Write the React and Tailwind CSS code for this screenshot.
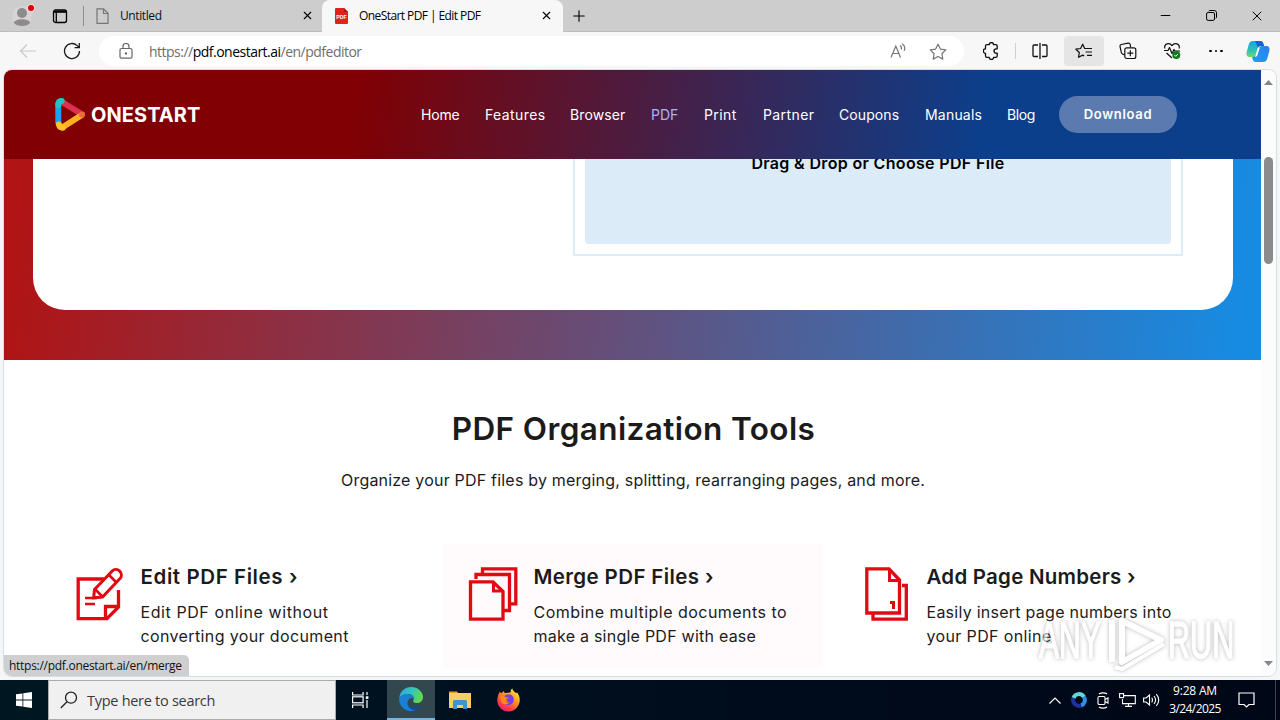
import { X, Plus, Minus } from "lucide-react";

const UI = "font-['Open_Sans',sans-serif]";
const SITE = "font-[Inter,sans-serif]";

const navLinks = [
  { label: "Home", cls: "w-[64px] tracking-[-0.2px]" },
  { label: "Features", cls: "w-[85px] tracking-[0.4px]" },
  { label: "Browser", cls: "w-[81px] tracking-[0.1px]" },
  { label: "PDF", cls: "w-[53px] tracking-[0px] text-[#a9b4f4]" },
  { label: "Print", cls: "w-[59px] tracking-[0.4px]" },
  { label: "Partner", cls: "w-[76px] tracking-[0.4px]" },
  { label: "Coupons", cls: "w-[86px] tracking-[0.1px]" },
  { label: "Manuals", cls: "w-[82px] tracking-[0.2px]" },
  { label: "Blog", cls: "w-[52px] tracking-[-0.4px]" },
];

function EditIcon() {
  return (
    <svg width="54" height="56" viewBox="0 0 54 56" fill="none" stroke="#e00b12" strokeWidth="3.3">
      <path d="M30 14H4.200v39.700H33L44.500 42V25" />
      <path d="M31.500 53V41.500H44.500" />
      <path d="M20.500 24.500 38 6.200a5.400 5.400 0 0 1 7.800 7.600L28.500 32l-8.800.8z" strokeWidth="3" />
      <path d="M34.500 9.500l8 8M21 24l7.800 8" strokeWidth="2.600" />
      <path d="M11 33h12M11 39h10" strokeWidth="2.400" />
    </svg>
  );
}

function MergeIcon() {
  return (
    <svg width="54" height="56" viewBox="0 0 54 56" fill="none" stroke="#e00b12" strokeWidth="3.3">
      <path d="M15.500 8V3.800H48.800V38.800H43" />
      <path d="M9 14V9.500H42.500V45.500H36" />
      <path d="M3.500 16.800H26L36 26.500V54.200H3.500z" />
      <path d="M26.500 16.500V26H36" strokeWidth="3.100" />
    </svg>
  );
}

function NumbersIcon() {
  return (
    <svg width="54" height="56" viewBox="0 0 54 56" fill="none" stroke="#e00b12" strokeWidth="3.300">
      <path d="M6.800 3.800H29L39.500 15V48H6.800z" />
      <path d="M29.500 4V15.500H39.500" strokeWidth="3" />
      <path d="M42 20.500H46.300V54.200H13V48" />
      <path d="M30 37.500H33.500V44" strokeWidth="3" />
    </svg>
  );
}

const tools = [
  {
    Icon: EditIcon,
    title: "Edit PDF Files ›",
    titleCls: "tracking-[0.59px]",
    lines: [
      { text: "Edit PDF online without", cls: "tracking-[0.58px]" },
      { text: "converting your document", cls: "tracking-[0.37px]" },
    ],
  },
  {
    Icon: MergeIcon,
    title: "Merge PDF Files ›",
    titleCls: "tracking-[0.38px]",
    lines: [
      { text: "Combine multiple documents to", cls: "tracking-[0.47px]" },
      { text: "make a single PDF with ease", cls: "tracking-[0.24px]" },
    ],
    hovered: true,
  },
  {
    Icon: NumbersIcon,
    title: "Add Page Numbers ›",
    titleCls: "tracking-[0.24px]",
    lines: [
      { text: "Easily insert page numbers into", cls: "tracking-[0.26px]" },
      { text: "your PDF online", cls: "tracking-[0.37px]" },
    ],
  },
];

function TabBar() {
  return (
    <div className={`flex h-8 shrink-0 items-center border-b border-[#bdbdbd] bg-[#cdcdcd] ${UI}`}>
      <div className="flex w-11 justify-center">
        <svg width="26" height="26" viewBox="0 0 26 26">
          <circle cx="13" cy="13" r="10" fill="#d8d4d4" />
          <circle cx="13" cy="10" r="5" fill="#8c8c8c" />
          <path d="M5 20c0-5 16-5 16 0-3 4-13 4-16 0z" fill="#8c8c8c" />
          <circle cx="22" cy="5" r="4" fill="#f3d5d5" />
          <circle cx="22" cy="5" r="3" fill="#e0000d" />
        </svg>
      </div>
      <div className="flex w-8 justify-center">
        <svg width="16" height="16" viewBox="0 0 16 16" fill="none" stroke="#000" strokeWidth="1.3">
          <rect x="1.500" y="2" width="13" height="12.500" rx="2" />
          <path d="M2 3.700h12" strokeWidth="2.200" />
          <path d="M4.300 4v10" strokeWidth="1.300" />
        </svg>
      </div>
      <div className="ml-[7px] h-5 w-px bg-[#8f8f8f]" />
      <div className="flex w-[238px] items-center pl-3">
        <svg width="13" height="16" viewBox="0 0 13 16" fill="none" stroke="#767676" strokeWidth="1.200">
          <path d="M1 .8h6.500L12 5.300v10H1zM7.500 1v4.500H12" />
        </svg>
        <span className="ml-[11px] flex-1 text-[12px] tracking-[-0.4px] text-[#111]">Untitled</span>
        <X size={13} strokeWidth={2} className="mr-[8px]" />
      </div>
      <div className="flex h-8 w-[241px] items-center rounded-t-lg bg-[#f7f7f7] pl-[13px]">
        <svg width="13" height="16" viewBox="0 0 13 16">
          <path d="M1 0H9l4 4v11a1 1 0 0 1-1 1H1a1 1 0 0 1-1-1V1a1 1 0 0 1 1-1z" fill="#e4201c" />
          <path d="M9 0l4 4H9z" fill="#a81512" />
          <text x="6.500" y="10.500" fontSize="5.200" fontWeight="700" fontFamily="Liberation Sans" fill="#fff" textAnchor="middle">PDF</text>
        </svg>
        <span className="ml-[11px] flex-1 text-[12px] tracking-[-0.58px] text-black">OneStart PDF | Edit PDF</span>
        <X size={13} strokeWidth={2} className="mr-[10px]" />
      </div>
      <Plus size={18} strokeWidth={1.5} className="ml-[7px]" />
      <div className="ml-auto flex">
        <div className="flex w-[46px] justify-center"><Minus size={15} strokeWidth={1.600} /></div>
        <div className="flex w-[46px] items-center justify-center">
          <svg width="11" height="11" viewBox="0 0 11 11" fill="none" stroke="#000">
            <rect x=".6" y="2.500" width="7.900" height="7.900" rx="1.500" />
            <path d="M2.700 1C3 .6 3.500.5 4 .5h4.300a2.200 2.200 0 0 1 2.200 2.200V7c0 .7-.2 1-.6 1.300" />
          </svg>
        </div>
        <div className="flex w-[46px] justify-center"><X size={16} strokeWidth={1.500} /></div>
      </div>
    </div>
  );
}

function Toolbar() {
  return (
    <div className={`flex h-[38px] shrink-0 items-center bg-[#f7f7f7] ${UI}`}>
      <div className="flex w-14 justify-center">
        <svg width="18" height="16" viewBox="0 0 18 16" fill="none" stroke="#c9c9c9" strokeWidth="1.200">
          <path d="M17 8H1.500M8 1.500 1.500 8 8 14.500" />
        </svg>
      </div>
      <div className="flex w-8 justify-center">
        <svg width="18" height="18" viewBox="0 0 18 18" fill="none" stroke="#1b1b1b" strokeWidth="1.300">
          <path d="M16.500 9a7.500 7.500 0 1 1-2.300-5.400L16 5.500M16.300 1v4.700h-4.700" />
        </svg>
      </div>
      <div className="ml-[11px] flex h-[30px] w-[865px] items-center rounded-full bg-white pl-5">
        <svg width="14" height="16" viewBox="0 0 14 16" fill="none" stroke="#666" strokeWidth="1.200">
          <rect x="1" y="5.500" width="12" height="9.700" rx="1.500" />
          <path d="M4 5.500V3.500a3 3 0 0 1 6 0v2" />
          <circle cx="7" cy="10.400" r=".6" fill="#666" />
        </svg>
        <span className="ml-4 flex-1 text-[14px] tracking-[-0.51px] text-[#6e6e6e]">
          https://<span className="text-black">pdf.onestart.ai</span>/en/pdfeditor
        </span>
        <svg width="17" height="16" viewBox="0 0 17 16" fill="none" stroke="#757575" strokeWidth="1.200">
          <path d="M1 14.500 5.800 3l4.700 11.500M2.700 10.500h6.200M10 2.500c1.500 1 1.800 2.500 1.300 4M12 .8c2.800 1.700 3.200 4.500 2.200 7" />
        </svg>
        <svg width="18" height="17" viewBox="0 0 18 17" fill="none" stroke="#757575" strokeWidth="1.200" strokeLinejoin="round" className="ml-[22px] mr-[17px]">
          <path d="M9 1.200l2.400 4.900 5.400.8-3.900 3.800.9 5.400L9 13.500l-4.800 2.600.9-5.400L1.200 6.900l5.400-.8z" />
        </svg>
      </div>
      <div className="ml-[7px] flex w-10 justify-center">
        <svg width="16" height="18" viewBox="0 0 16 18" fill="none" stroke="#111" strokeWidth="1.300" strokeLinejoin="round">
          <path d="M2.500 5.500V4A1.300 1.300 0 0 1 3.800 2.700H6.200a2.200 2.200 0 0 1 4.400 0h2.300A1.300 1.300 0 0 1 14.200 4v2.800h-1a2.100 2.100 0 0 0 0 4.300h1V14a1.300 1.300 0 0 1-1.300 1.300h-2.300a2.200 2.200 0 0 1-4.400 0H3.800A1.300 1.300 0 0 1 2.500 14v-2.700a2.200 2.200 0 0 1 0-4.500z" />
        </svg>
      </div>
      <div className="ml-1 mr-1 h-4 w-px bg-[#d0d0d0]" />
      <div className="flex w-10 justify-center">
        <svg width="16" height="16" viewBox="0 0 16 16" fill="none" stroke="#111" strokeWidth="1.300">
          <path d="M6 2H2a1 1 0 0 0-1 1v9.500a1 1 0 0 0 1 1h4M10 2h4a1 1 0 0 1 1 1v9.500a1 1 0 0 1-1 1h-4M8 0v16" />
        </svg>
      </div>
      <div className="ml-1 flex h-[30px] w-10 items-center justify-center rounded bg-[#e5e5e5]">
        <svg width="18" height="16" viewBox="0 0 18 16" fill="none" stroke="#111" strokeWidth="1.200" strokeLinejoin="round">
          <path d="M10 5.500H9.700L7.700 1.200 5.600 5.500l-4.700.7 3.400 3.300-.8 4.800 4.200-2.200 1.500.8M10 5.500h7M10.500 9H17M12 12.300h5" />
        </svg>
      </div>
      <div className="ml-1 flex w-10 justify-center">
        <svg width="18" height="18" viewBox="0 0 18 18" fill="none" stroke="#111" strokeWidth="1.200">
          <rect x="5.800" y="5.800" width="11" height="10.700" rx="2" />
          <path d="M11.300 8.200v6M8.300 11.200h6M5.500 13 3.500 12C2.500 11.500 2.500 11 2.200 10L1 4.500C.8 3.300 1.200 2.700 2.300 2.500L9 1.200c1.200-.2 2 .2 2.200 1.300l.5 3" />
        </svg>
      </div>
      <div className="ml-1 flex w-10 justify-center">
        <svg width="18" height="18" viewBox="0 0 18 18" fill="none" stroke="#111" strokeWidth="1.200" strokeLinejoin="round">
          <path d="M1.800 6.500C.8 1.500 6.500 0 9 3.600 11.500 0 17.200 1.500 16.200 6.500M1 8.500h4l1.500-3 2.500 6 2-4 .8 1.500H17M3.500 11 9 16" />
          <circle cx="13.300" cy="13" r="4" fill="#14791a" stroke="none" />
          <path d="M11.500 13l1.300 1.300 2.300-2.400" stroke="#fff" strokeWidth="1" />
        </svg>
      </div>
      <div className="ml-1 flex w-10 justify-center gap-[3px]">
        <i className="size-[2.5px] rounded-full bg-black" />
        <i className="size-[2.5px] rounded-full bg-black" />
        <i className="size-[2.5px] rounded-full bg-black" />
      </div>
      <div className="ml-[2px] flex w-10 justify-center">
        <svg width="24" height="23" viewBox="0 0 24 23">
          <defs>
            <linearGradient id="cpA" x1="0" y1="0" x2="0" y2="1">
              <stop offset="0" stopColor="#16a6e8" />
              <stop offset=".6" stopColor="#2cc3b0" />
              <stop offset="1" stopColor="#7bd66e" />
            </linearGradient>
            <linearGradient id="cpB" x1="1" y1="0" x2="0" y2="1">
              <stop offset="0" stopColor="#2d7df0" />
              <stop offset="1" stopColor="#1ba0f0" />
            </linearGradient>
          </defs>
          <path d="M17 22h-7c-2 0-3-1-3.500-3L6 16c2 0 3.500-.5 4-2.500L12.500 9c.6-2 1.600-3 3.500-3H20c3 0 4 2 3.300 5l-1.900 7c-.7 2.500-1.900 4-4.400 4z" fill="url(#cpB)" />
          <path d="M7 1h7c2 0 3 1 3.500 3l.5 2h-3c-2 0-3 1-3.500 3L10 14c-.6 2-1.600 3-3.500 3H4c-3 0-4-2-3.300-5L2.600 5C3.300 2.500 4.500 1 7 1z" fill="url(#cpA)" />
          <path d="M9 1h5c2 0 3 1 3.500 3l.5 2h-3c-1.500 0-2.500.6-3 1.800z" fill="#1463c8" />
          <path d="M11.500 9.500c.5-1.700 1.300-2 2.300-2L11.500 15c-.5 1.300-1.300 1.800-2.500 1.800z" fill="#fff" />
        </svg>
      </div>
    </div>
  );
}

function SiteHeader() {
  return (
    <header className="relative z-10 flex h-[89px] shrink-0 items-center bg-[linear-gradient(98deg,#800003_28%,#0b3f8c_78%)] pl-[50px] text-white">
      <div className="flex w-[367px] items-center">
        <svg width="32" height="35" viewBox="0 0 32 35" fill="none" strokeWidth="6" strokeLinecap="round" strokeLinejoin="round">
          <path d="M8 5 27.500 17" stroke="#dc3250" />
          <path d="M27 18.500 9 30" stroke="#fbb022" />
          <path d="M28 17.500v.3" stroke="#ee6a3f" />
          <path d="M4.300 26V7.500C4.300 5 5.800 4 7.500 4" stroke="#1f9ff0" />
          <path d="M4.300 8C4.300 5 5.800 4 7.500 4" stroke="#27c0c8" />
          <path d="M5 27.500c.3 2.300 2 3.500 4 3" stroke="#fcc32a" />
        </svg>
        <span className={`ml-[5px] text-[20px] font-bold tracking-[0.06px] ${SITE}`}>ONESTART</span>
      </div>
      <nav className={`flex text-[14px] ${SITE}`}>
        {navLinks.map((link) => (
          <a key={link.label} className={link.cls}>{link.label}</a>
        ))}
      </nav>
      <button className={`h-[37px] w-[118px] rounded-full bg-[#5b7bb0] text-[13px] font-semibold tracking-[0.7px] ${SITE}`}>Download</button>
    </header>
  );
}

function Hero() {
  return (
    <section className="-mt-4 h-[217px] shrink-0 bg-[linear-gradient(98deg,#b01414_2%,#178be2_98%)] px-[28px] pl-[29px]">
      <div className="flex h-[167px] justify-end rounded-b-[32px] bg-white pr-[50px]">
        <div className="h-[113px] w-[610px] border-2 border-[#dcecf8] p-[10px]">
          <div className={`h-full rounded bg-[#dbecf8] text-center text-[16px] font-semibold leading-4 tracking-[0.34px] text-black ${SITE}`}>
            Drag &amp; Drop or Choose PDF File
          </div>
        </div>
      </div>
    </section>
  );
}

function ToolCard({ tool }) {
  const { Icon, title, lines, titleCls, hovered } = tool;
  return (
    <div className={`flex h-[124px] w-[380px] gap-[13px] rounded pl-6 pt-[21px] ${hovered ? "bg-[#fffafb]" : ""}`}>
      <Icon />
      <div className="whitespace-nowrap text-[#1b1b1b]">
        <h3 className={`text-[20.5px] font-semibold leading-6 ${titleCls}`}>{title}</h3>
        <div className="mt-[11px] text-[16px] leading-6">
          {lines.map((line) => <p key={line.text} className={line.cls}>{line.text}</p>)}
        </div>
      </div>
    </div>
  );
}

function Watermark() {
  return (
    <svg width="204" height="64" viewBox="0 0 204 64" className="absolute bottom-[2px] right-[40px] opacity-60 [filter:drop-shadow(0_0_2px_#888)]">
      <g fill="#fff" stroke="#fff" strokeWidth="1.500" fontFamily="Liberation Sans" fontSize="51">
        <text transform="translate(7 48) scale(.59 1)">ANY</text>
        <text transform="translate(136 48) scale(.6 1)">RUN</text>
      </g>
      <g fill="none" stroke="#fff" strokeWidth="6" strokeLinejoin="round">
        <path d="M80 10v42" />
        <path d="M90 11l39 19-39 22z" />
        <path d="M83 57l7 2 42-25" strokeWidth="4" />
      </g>
    </svg>
  );
}

function Scrollbar() {
  return (
    <div className="flex w-[15px] shrink-0 flex-col items-center bg-[#fcfcfc] pb-[10px] pt-[10px]">
      <svg width="9" height="5" viewBox="0 0 9 5"><path d="M0 5 4.500 0 9 5z" fill="#858585" /></svg>
      <div className="mt-[72px] h-[107px] w-[9px] rounded-full bg-[#8b8b8b]" />
      <svg width="9" height="5" viewBox="0 0 9 5" className="mt-auto"><path d="M0 0l4.500 5L9 0z" fill="#858585" /></svg>
    </div>
  );
}

function Page() {
  return (
    <div className="flex h-[610px] shrink-0 bg-[#f4f6f8] px-1 pb-1">
      <div className="relative flex w-full overflow-hidden rounded-lg bg-white shadow-[0_0_0_1px_#dadcde]">
        <main className={`flex w-[1257px] flex-col overflow-hidden ${SITE}`}>
          <SiteHeader />
          <Hero />
          <section className="flex flex-col items-center pt-[49px]">
            <h1 className="pl-[2px] text-[31.5px] font-semibold leading-10 tracking-[0.4px] text-[#1b1b1b]">PDF Organization Tools</h1>
            <p className="mt-[19px] pl-px text-[16px] leading-6 tracking-[0.2px] text-[#1b1b1b]">
              Organize your PDF files by merging, splitting, rearranging pages, and more.
            </p>
            <div className="mt-[52px] flex w-[1166px] justify-between">
              {tools.map((tool) => <ToolCard key={tool.title} tool={tool} />)}
            </div>
          </section>
        </main>
        <Scrollbar />
        <Watermark />
        <div className={`absolute bottom-0 left-0 h-[21px] w-[185px] rounded-tr-[5px] bg-[#cfcfcf] pl-[5px] text-[12px] leading-[21px] tracking-[-0.28px] text-[#111] ${UI}`}>
          https://pdf.onestart.ai/en/merge
        </div>
      </div>
    </div>
  );
}

function EdgeIcon() {
  return (
    <svg width="24" height="24" viewBox="0 0 24 24">
      <defs>
        <linearGradient id="edA" x1="0" y1="0" x2="1" y2=".3">
          <stop offset="0" stopColor="#2aa6e0" />
          <stop offset=".6" stopColor="#35c8b8" />
          <stop offset="1" stopColor="#62d84e" />
        </linearGradient>
      </defs>
      <path d="M.3 11C1 4 6 0 12 0c7 0 12 5 12 10 0 4-3 6-6 6-3.500 0-4.500-1.500-3.500-3C16 9 12 6.500 8.500 7 4.500 7.500 1.500 9 .3 11z" fill="url(#edA)" />
      <path d="M0 12C1 8.500 5 6.800 9 7c3 .2 5.500 2 5.800 4.500C12 9.800 8.500 12 8.800 16c.3 4 3.700 7 7.700 7.200C8 26.500 0 20 0 12z" fill="#1b7fd6" />
      <path d="M9 13c-1.500 6 5 9.500 13 5.500-1.500 2.500-3.500 4-6 4.800C10 22.500 7 17.500 9 13z" fill="#0d4fa0" />
    </svg>
  );
}

function FirefoxIcon() {
  return (
    <svg width="23" height="24" viewBox="0 0 24 24">
      <defs>
        <linearGradient id="ffA" x1=".9" y1="0" x2=".2" y2="1">
          <stop offset="0" stopColor="#fff04a" />
          <stop offset=".4" stopColor="#ff9a1f" />
          <stop offset=".75" stopColor="#ff3d45" />
          <stop offset="1" stopColor="#e8167c" />
        </linearGradient>
      </defs>
      <path d="M3 3c.5 1 1 1.500 1.500 2L7 2.500c.3 1.500 1 2 2.500 2.300L14.500 4c-.5-1.500 0-3 1.500-4 .3 2 2 3 4 5l1-1c2 3 3 6 2.700 9-.6 6-5.500 11-11.700 11S.5 19 .3 13C.2 9 1.500 6 3 3z" fill="url(#ffA)" />
      <path d="M7 9c1.500-3 6-4 8.500-2 3 2.500 2.500 7.500-.5 9.500-3 1.800-7 .5-8.500-2.500 2 .8 3.500 0 5-1-.5-1-2-1-3.500-1.300z" fill="#7a3fe0" />
      <path d="M3.500 8.500C5 7 7 7.500 9 9c.8.500 2 .5 3 .5-.5 1.500-2.500 1.500-3 3 0 2 2 2.500 4 1.500-2 4-8 3-9-1z" fill="#ff8a1c" />
    </svg>
  );
}

function Taskbar() {
  return (
    <div className={`flex h-10 shrink-0 items-center bg-[linear-gradient(90deg,#001721,#000b1c_65%,#000716)] text-white ${UI}`}>
      <div className="flex w-12 justify-center">
        <svg width="16" height="16" viewBox="0 0 16 16" fill="#fff">
          <path d="M0 2.300 6.500 1.400V7.600H0zM7.300 1.300 16 0v7.600H7.300zM0 8.400h6.500v6.200L0 13.700zM7.300 8.400H16V16l-8.700-1.300z" />
        </svg>
      </div>
      <div className="flex h-10 w-72 items-center border border-[#a9adb0] bg-[#f0f0f0] pl-[11px]">
        <svg width="18" height="18" viewBox="0 0 18 18" fill="none" stroke="#222" strokeWidth="1.300">
          <circle cx="11" cy="6.700" r="5.500" />
          <path d="M7 10.700.8 17" />
        </svg>
        <span className="ml-[9px] pt-[2px] text-[14.5px] tracking-[-0.28px] text-[#3a3a3a]">Type here to search</span>
      </div>
      <div className="flex w-[49px] justify-center">
        <svg width="17" height="16" viewBox="0 0 17 16" fill="none" stroke="#fff" strokeWidth="1.200">
          <path d="M.6 0v3h10.500V0M.6 16v-3h10.500v3" />
          <rect x=".6" y="4.800" width="10.500" height="6" />
          <path d="M15 0v3M15 8v8" />
          <rect x="13.800" y="4.300" width="2.600" height="2.600" fill="#fff" stroke="none" />
        </svg>
      </div>
      <div className="ml-[2px] flex h-10 w-12 items-center justify-center border-b-2 border-[#76b4e6] bg-[#33474f]"><EdgeIcon /></div>
      <div className="flex w-[49px] justify-center">
        <svg width="22" height="20" viewBox="0 0 22 20">
          <path d="M0 1.500h8l1.500 2H0z" fill="#e3a220" />
          <path d="M0 3h22v15H0z" fill="#f7cf62" />
          <path d="M4 19v-7.500A1.500 1.500 0 0 1 5.500 10h11a1.500 1.500 0 0 1 1.500 1.500V19h-4v-4H8v4z" fill="#3c94d2" />
        </svg>
      </div>
      <div className="flex w-[49px] justify-center"><FirefoxIcon /></div>
      <div className="ml-auto flex h-10 items-center">
        <svg width="12" height="7" viewBox="0 0 12 7" fill="none" stroke="#fff" strokeWidth="1.200"><path d="M.5 6.500 6 1l5.500 5.500" /></svg>
        <svg width="16" height="16" viewBox="0 0 16 16" fill="none" strokeWidth="4" className="ml-[10px]">
          <path d="M2.500 6A5.800 5.800 0 0 1 13 5" stroke="#5fd8d8" />
          <path d="M13 5a5.800 5.800 0 0 1-3 8.500" stroke="#2f8fe8" />
          <path d="M10 13.500A5.800 5.800 0 0 1 2.500 6" stroke="#20309c" />
        </svg>
        <svg width="12" height="17" viewBox="0 0 12 17" fill="none" stroke="#fff" strokeWidth="1.100" className="ml-[10px]">
          <rect x="1" y="4.500" width="7" height="8" rx="1.200" />
          <path d="M8 7.500 11 6v5L8 9.500M2 2C4 .5 8 .5 10 2M2 15c2 1.500 6 1.500 8 0" />
        </svg>
        <svg width="17" height="14" viewBox="0 0 17 14" fill="none" stroke="#fff" strokeWidth="1.100" className="ml-[10px]">
          <path d="M5 2.600h11.300v8H3.500V6M6 13.400h7M9.500 10.600v2.800" />
          <rect x=".6" y=".6" width="4" height="4" />
        </svg>
        <svg width="17" height="14" viewBox="0 0 17 14" fill="none" stroke="#fff" strokeWidth="1.100" className="ml-[7px]">
          <path d="M.6 5v4h2.500L6.500 12V2L3.100 5zM8.700 4.700c1 1.500 1 3.200 0 4.700M11 3c2 2.500 2 5.500 0 8M13.300 1.200c3 3.500 3 8 0 11.600" />
        </svg>
        <div className="ml-[9px] w-[52px] text-center text-[12px] leading-[18px]">
          <div className="tracking-[-0.21px]">9:28 AM</div>
          <div className="tracking-[-0.61px]">3/24/2025</div>
        </div>
        <svg width="17" height="16" viewBox="0 0 17 16" fill="none" stroke="#fff" strokeWidth="1.200" className="ml-[17px]">
          <path d="M1 1h15v11.500h-5L8.500 15 6 12.500H1z" />
        </svg>
        <div className="ml-[20px] mr-[4px] h-10 w-px bg-[#39424b]" />
      </div>
    </div>
  );
}

export default function App() {
  return (
    <div className="flex h-screen w-screen flex-col overflow-hidden bg-[#f7f7f7]">
      <TabBar />
      <Toolbar />
      <Page />
      <Taskbar />
    </div>
  );
}
